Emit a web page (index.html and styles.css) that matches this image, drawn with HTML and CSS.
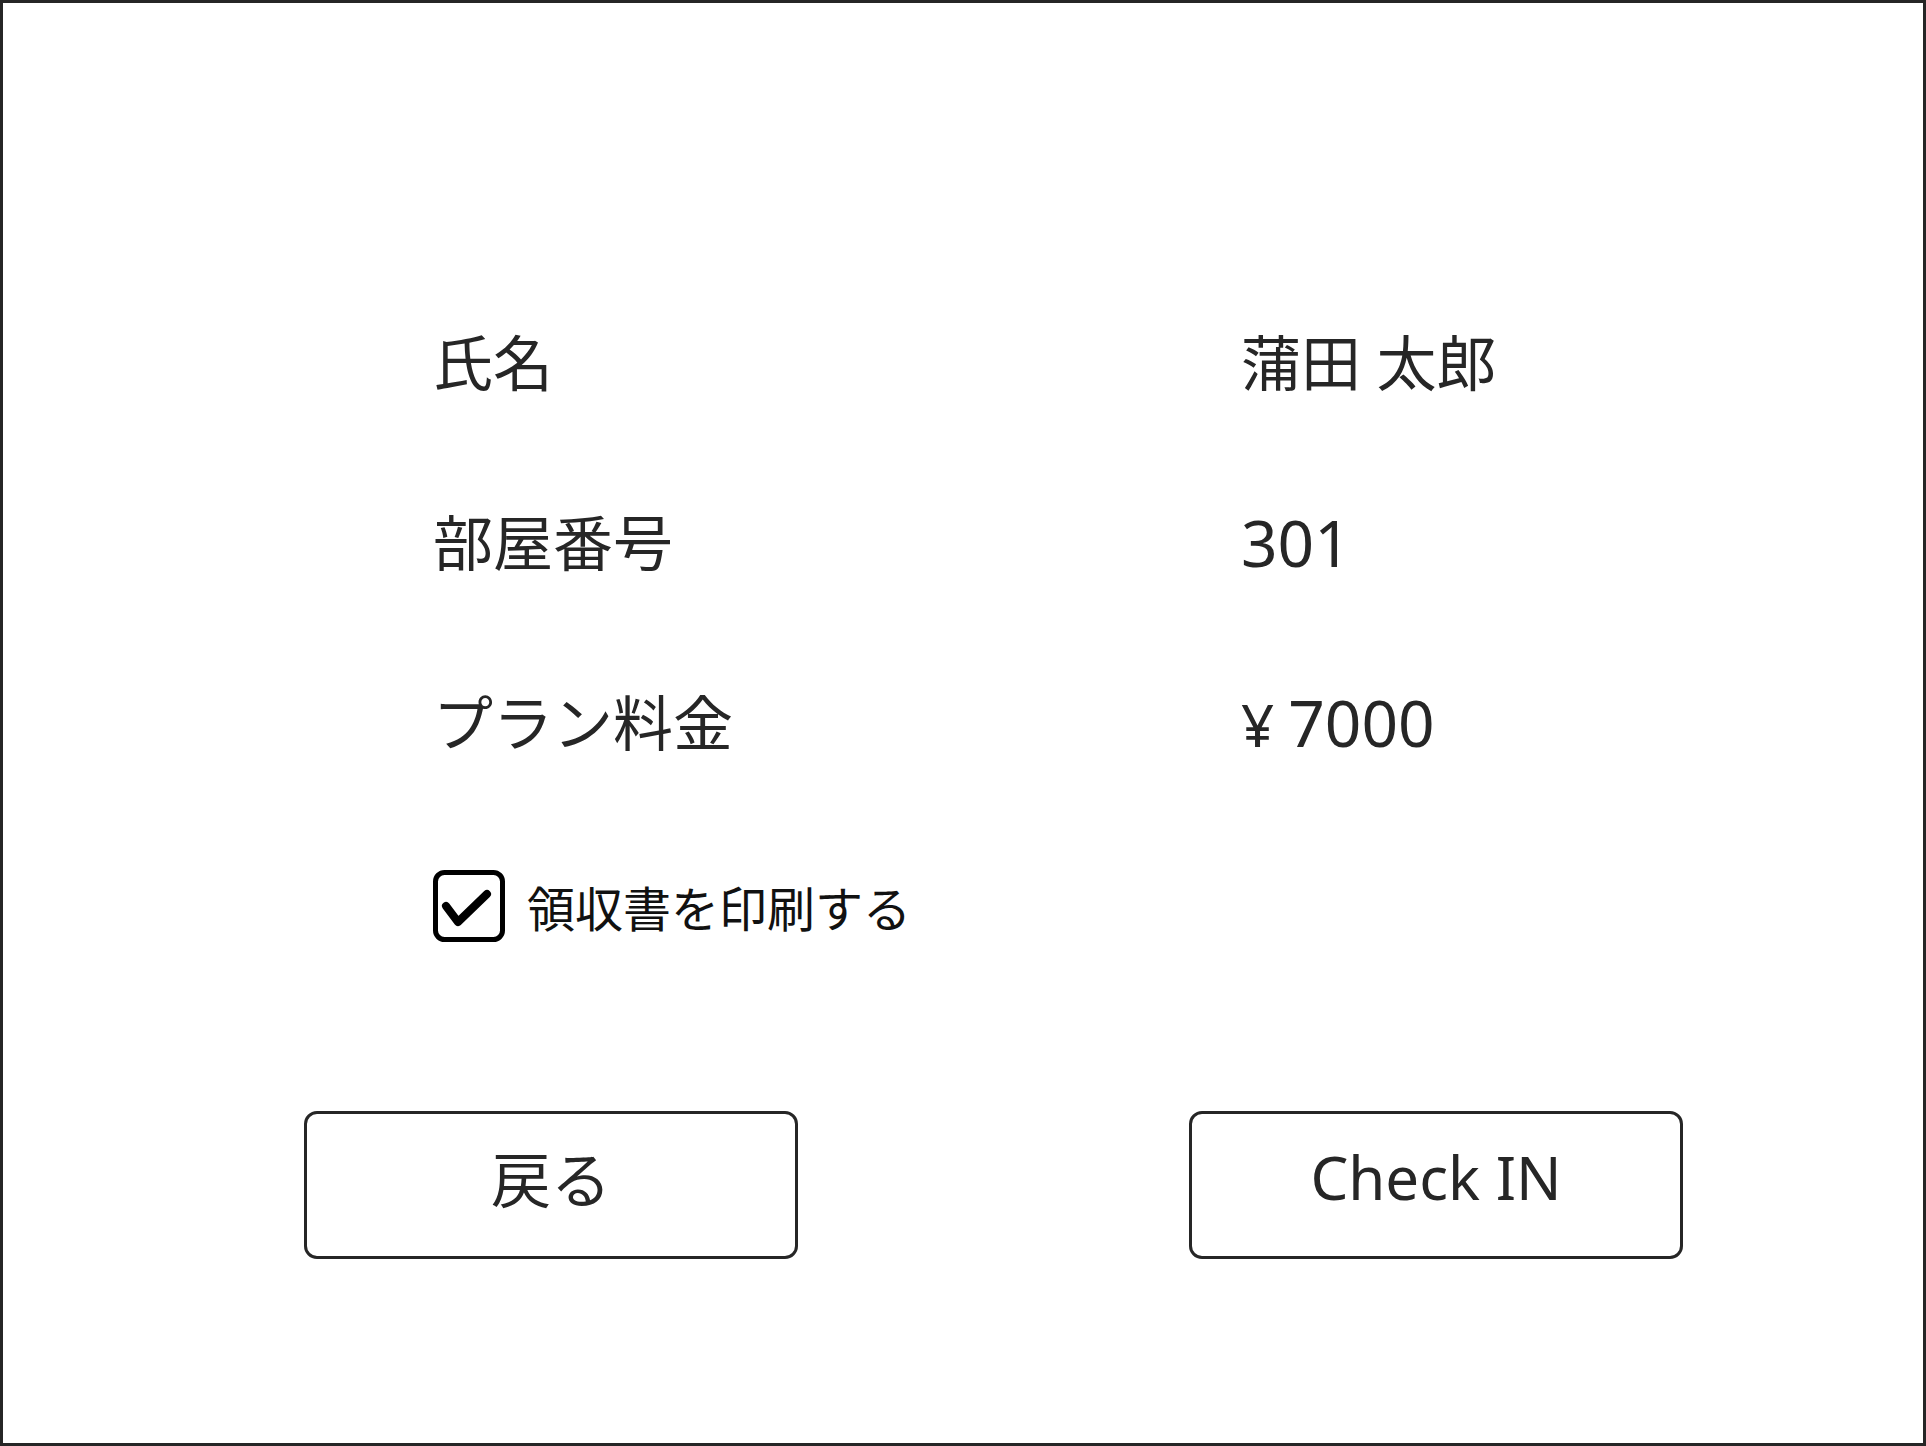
FILE: index.html
```html
<!DOCTYPE html>
<html lang="ja">
<head>
  <meta charset="UTF-8" />
  <meta name="viewport" content="width=device-width, initial-scale=1.0"/>
  <title>チェックイン確認</title>
  <link rel="stylesheet" href="styles.css">
</head>
<body>
  <main class="screen">
    <section class="details">
      <div class="label">氏名</div>
      <div class="value">蒲田 太郎</div>
      <div class="label">部屋番号</div>
      <div class="value num">301</div>
      <div class="label">プラン料金</div>
      <div class="value num"><span class="yen">¥</span>7000</div>
    </section>

    <label class="receipt">
      <input type="checkbox" checked />
      <span class="box">
        <svg width="72" height="72" viewBox="0 0 72 72">
          <rect x="2.5" y="2.5" width="67" height="67" rx="9" fill="none" stroke="#000" stroke-width="5"/>
          <path d="M13 36 L25 52 L54 24" fill="none" stroke="#000" stroke-width="8" stroke-linecap="round" stroke-linejoin="round"/>
        </svg>
      </span>
      <span class="receipt-text">領収書を印刷する</span>
    </label>

    <div class="actions">
      <button class="btn back" type="button">戻る</button>
      <button class="btn checkin" type="button">Check IN</button>
    </div>
  </main>
</body>
</html>
```

FILE: styles.css
```css
* {
  box-sizing: border-box;
  margin: 0;
  padding: 0;
}
body {
  font-family: "Noto Sans", "Noto Sans CJK JP", sans-serif;
  color: #262626;
  background: #fff;
}
.screen {
  height: 1446px;
  border: 3px solid #262626;
  padding-top: 316px;
}
.details {
  display: grid;
  grid-template-columns: 808px auto;
  row-gap: 92px;
  padding-left: 430px;
}
.label, .value {
  font-size: 60px;
  line-height: 88px;
}
.value.num {
  font-size: 64px;
}
.yen {
  font-size: 58px;
  line-height: 1;
  margin-right: 14px;
}
.receipt {
  display: flex;
  align-items: center;
  gap: 22px;
  margin: 100px 0 0 430px;
  cursor: pointer;
}
.receipt input {
  display: none;
}
.box {
  display: block;
  width: 72px;
  height: 72px;
}
.box svg {
  display: block;
}
.receipt-text {
  font-size: 48px;
  color: #111;
  line-height: 72px;
  padding-top: 6px;
}
.actions {
  display: flex;
  gap: 391px;
  padding-left: 301px;
  margin-top: 166px;
}
.btn {
  width: 494px;
  height: 148px;
  background: #fff;
  border: 3px solid #262626;
  border-radius: 13px;
  font-family: "Noto Sans", "Noto Sans CJK JP", sans-serif;
  font-size: 60px;
  color: #262626;
  padding-bottom: 16px;
  cursor: pointer;
}
```
